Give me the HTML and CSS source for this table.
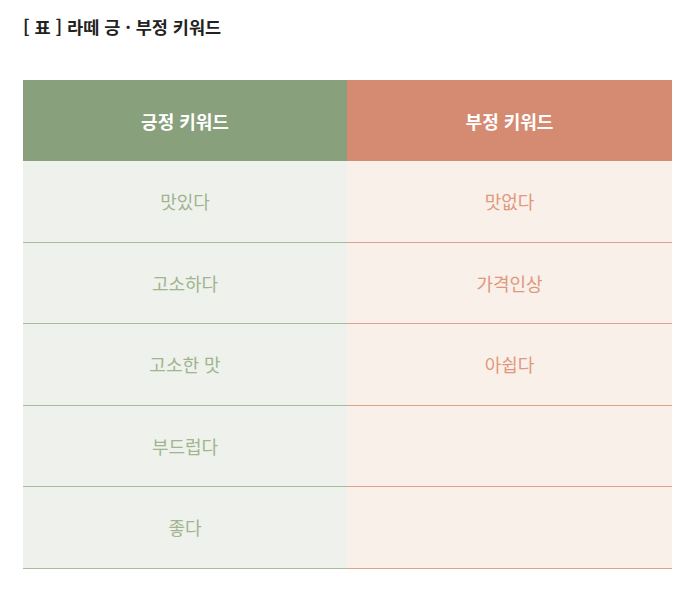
FILE: index.html
```html
<!DOCTYPE html>
<html lang="ko">
<head>
<meta charset="utf-8">
<link rel="stylesheet" href="styles.css">
</head>
<body>
<div class="page">
  <h3 class="title">[ 표 ] 라떼 긍 · 부정 키워드</h3>
  <div class="kw-table">
    <div class="col pos">
      <div class="head">긍정 키워드</div>
      <div class="cell">맛있다</div>
      <div class="cell">고소하다</div>
      <div class="cell">고소한 맛</div>
      <div class="cell">부드럽다</div>
      <div class="cell">좋다</div>
    </div>
    <div class="col neg">
      <div class="head">부정 키워드</div>
      <div class="cell">맛없다</div>
      <div class="cell">가격인상</div>
      <div class="cell">아쉽다</div>
      <div class="cell"></div>
      <div class="cell"></div>
    </div>
  </div>
</div>
</body>
</html>
```
FILE: styles.css
```css
html, body { margin: 0; padding: 0; background: #fff; }
body { font-family: "Noto Sans CJK KR", "Noto Sans", sans-serif; }
.page { padding: 15px 21px 0 23px; width: 649px; }
.title {
  margin: 0;
  font-size: 17.5px;
  line-height: 24px;
  font-weight: 700;
  color: #222;
}
.kw-table {
  margin-top: 41px;
  display: grid;
  grid-template-columns: 324px 325px;
}
.col { display: flex; flex-direction: column; }
.head {
  height: 81px;
  display: flex;
  align-items: center;
  justify-content: center;
  color: #fff;
  font-weight: 700;
  font-size: 18px;
}
.cell {
  box-sizing: border-box;
  height: 81.5px;
  display: flex;
  align-items: center;
  justify-content: center;
  font-size: 18px;
  border-bottom: 1px solid;
}
.pos .head { background: #88a07b; }
.pos .cell { background: #eff1ec; color: #9fb58f; border-color: #a9bd9c; }
.neg .head { background: #d58b72; }
.neg .cell { background: #f9f0ea; color: #e0987c; border-color: #e3a288; }
```
